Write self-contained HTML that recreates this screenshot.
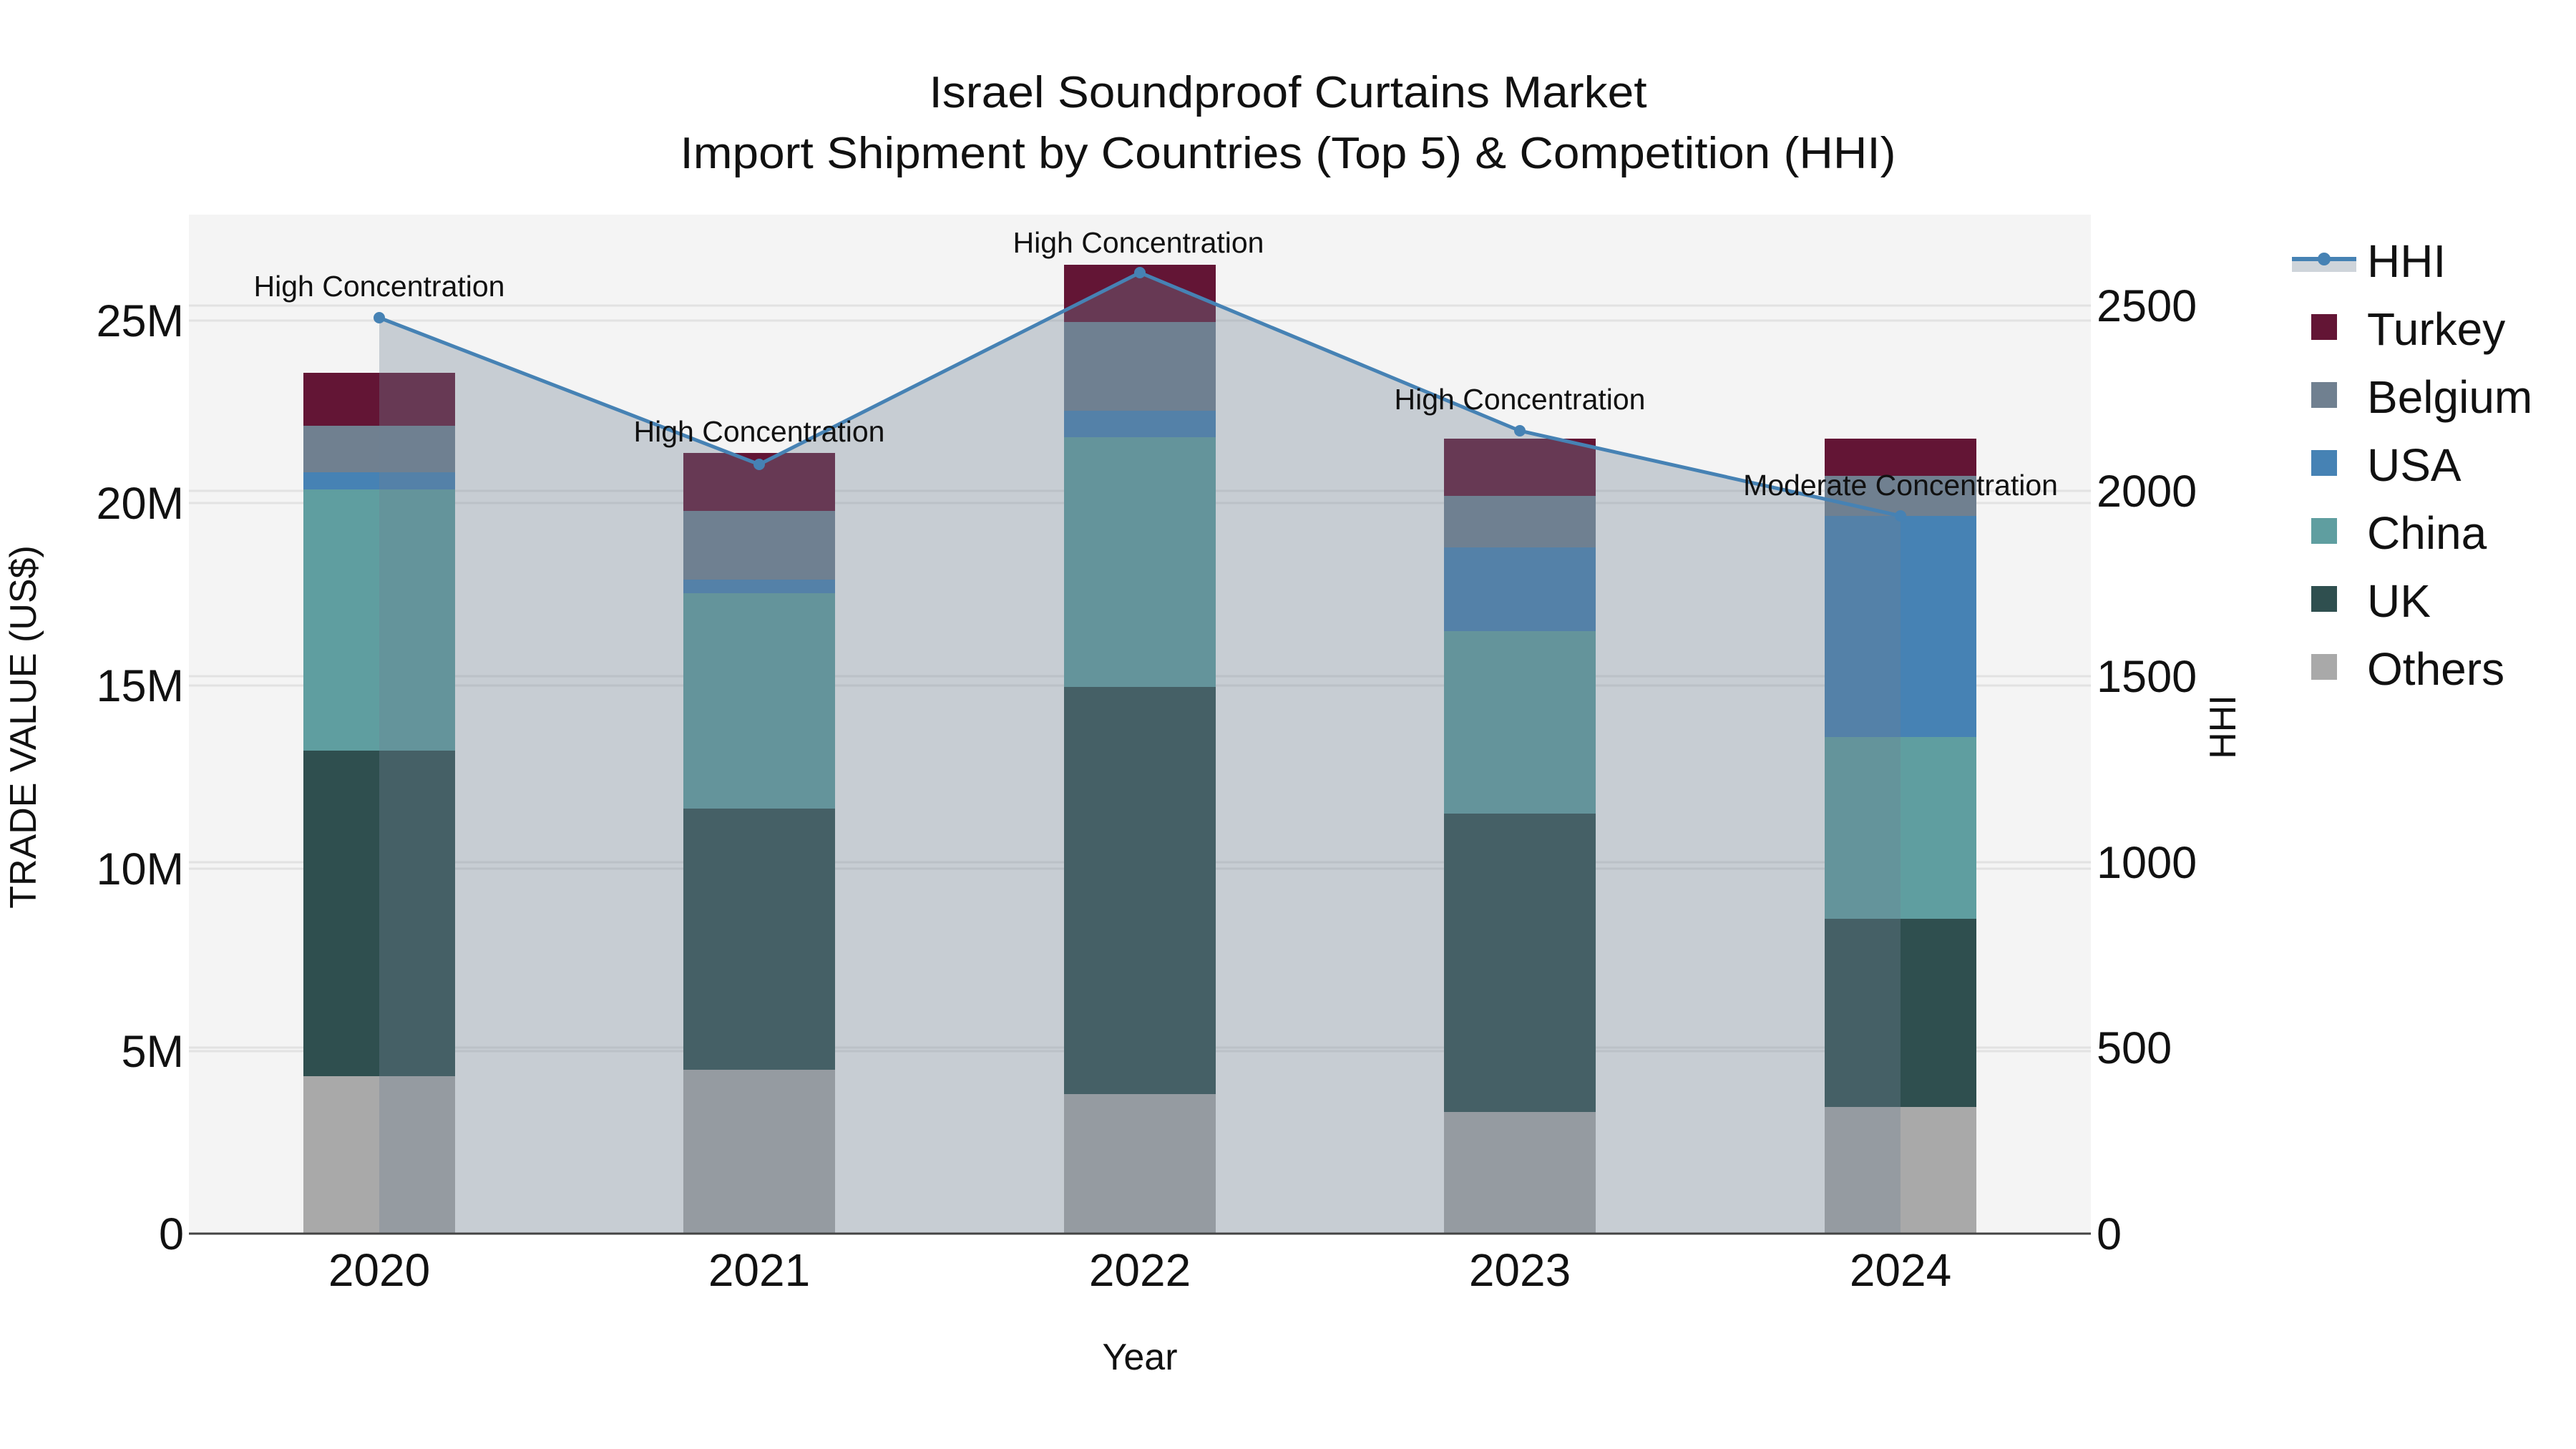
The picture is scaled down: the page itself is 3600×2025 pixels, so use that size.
<!DOCTYPE html>
<html><head><meta charset="utf-8"><style>html,body{margin:0;padding:0;background:#fff}svg{display:block}text{font-family:"Liberation Sans",Arial,sans-serif;fill:#111}</style></head>
<body>
<svg width="3600" height="2025" viewBox="0 0 3600 2025" xmlns="http://www.w3.org/2000/svg">
<rect x="0" y="0" width="3600" height="2025" fill="#fff"/>
<text x="1800" y="150" font-size="62" text-anchor="middle" textLength="1003" lengthAdjust="spacingAndGlyphs">Israel Soundproof Curtains Market</text>
<text x="1800" y="235" font-size="62" text-anchor="middle" textLength="1699" lengthAdjust="spacingAndGlyphs">Import Shipment by Countries (Top 5) &amp; Competition (HHI)</text>
<rect x="264" y="300" width="2658" height="1424" fill="#f4f4f4"/>
<g stroke="#e2e2e2" stroke-width="3">
<line x1="264" x2="2922" y1="1469" y2="1469"/><line x1="264" x2="2922" y1="1214" y2="1214"/><line x1="264" x2="2922" y1="958" y2="958"/><line x1="264" x2="2922" y1="703" y2="703"/><line x1="264" x2="2922" y1="448" y2="448"/>
<line x1="264" x2="2922" y1="1464" y2="1464"/><line x1="264" x2="2922" y1="1205" y2="1205"/><line x1="264" x2="2922" y1="945" y2="945"/><line x1="264" x2="2922" y1="686" y2="686"/><line x1="264" x2="2922" y1="427" y2="427"/>
</g>
<g>
<rect x="424" y="1504" width="212" height="220" fill="#a9a9a9"/><rect x="424" y="1049" width="212" height="455" fill="#2f4f4f"/><rect x="424" y="684" width="212" height="365" fill="#5f9ea0"/><rect x="424" y="660" width="212" height="24" fill="#4682b4"/><rect x="424" y="595" width="212" height="65" fill="#708090"/><rect x="424" y="521" width="212" height="74" fill="#631535"/>
<rect x="955" y="1495" width="212" height="229" fill="#a9a9a9"/><rect x="955" y="1130" width="212" height="365" fill="#2f4f4f"/><rect x="955" y="829" width="212" height="301" fill="#5f9ea0"/><rect x="955" y="810" width="212" height="19" fill="#4682b4"/><rect x="955" y="714" width="212" height="96" fill="#708090"/><rect x="955" y="633" width="212" height="81" fill="#631535"/>
<rect x="1487" y="1529" width="212" height="195" fill="#a9a9a9"/><rect x="1487" y="960" width="212" height="569" fill="#2f4f4f"/><rect x="1487" y="611" width="212" height="349" fill="#5f9ea0"/><rect x="1487" y="574" width="212" height="37" fill="#4682b4"/><rect x="1487" y="450" width="212" height="124" fill="#708090"/><rect x="1487" y="370" width="212" height="80" fill="#631535"/>
<rect x="2018" y="1554" width="212" height="170" fill="#a9a9a9"/><rect x="2018" y="1137" width="212" height="417" fill="#2f4f4f"/><rect x="2018" y="882" width="212" height="255" fill="#5f9ea0"/><rect x="2018" y="765" width="212" height="117" fill="#4682b4"/><rect x="2018" y="693" width="212" height="72" fill="#708090"/><rect x="2018" y="613" width="212" height="80" fill="#631535"/>
<rect x="2550" y="1547" width="212" height="177" fill="#a9a9a9"/><rect x="2550" y="1284" width="212" height="263" fill="#2f4f4f"/><rect x="2550" y="1030" width="212" height="254" fill="#5f9ea0"/><rect x="2550" y="721" width="212" height="309" fill="#4682b4"/><rect x="2550" y="665" width="212" height="56" fill="#708090"/><rect x="2550" y="613" width="212" height="52" fill="#631535"/>
</g>
<polygon points="530,444 1061,649 1593,381 2124,602 2656,721 2656,1724 530,1724" fill="rgb(112,128,147)" fill-opacity="0.34"/>
<line x1="264" x2="2922" y1="1724" y2="1724" stroke="#444" stroke-width="3"/>
<polyline points="530,444 1061,649 1593,381 2124,602 2656,721" fill="none" stroke="#4682b4" stroke-width="5"/>
<g fill="#4682b4"><circle cx="530" cy="444" r="8"/><circle cx="1061" cy="649" r="8"/><circle cx="1593" cy="381" r="8"/><circle cx="2124" cy="602" r="8"/><circle cx="2656" cy="721" r="8"/></g>
<g font-size="41" text-anchor="middle">
<text x="530" y="414">High Concentration</text>
<text x="1061" y="617">High Concentration</text>
<text x="1591" y="353">High Concentration</text>
<text x="2124" y="572">High Concentration</text>
<text x="2656" y="692">Moderate Concentration</text>
</g>
<g font-size="63" text-anchor="end">
<text x="257" y="1746">0</text><text x="257" y="1491">5M</text><text x="257" y="1236">10M</text><text x="257" y="980">15M</text><text x="257" y="725">20M</text><text x="257" y="470">25M</text>
</g>
<g font-size="63">
<text x="2930" y="1746">0</text><text x="2930" y="1486">500</text><text x="2930" y="1227">1000</text><text x="2930" y="967">1500</text><text x="2930" y="708">2000</text><text x="2930" y="449">2500</text>
</g>
<g font-size="64" text-anchor="middle">
<text x="530" y="1797">2020</text><text x="1061" y="1797">2021</text><text x="1593" y="1797">2022</text><text x="2124" y="1797">2023</text><text x="2656" y="1797">2024</text>
</g>
<text x="1593" y="1914" font-size="52" text-anchor="middle">Year</text>
<text transform="translate(50,1016) rotate(-90)" font-size="52" text-anchor="middle">TRADE VALUE (US$)</text>
<text transform="translate(3124,1016) rotate(-90)" font-size="52" text-anchor="middle">HHI</text>
<rect x="3203" y="362" width="90" height="18" fill="rgb(112,128,147)" fill-opacity="0.34"/>
<line x1="3203" x2="3293" y1="362" y2="362" stroke="#4682b4" stroke-width="6"/>
<circle cx="3248" cy="362" r="9" fill="#4682b4"/>
<rect x="3230" y="439" width="36" height="36" fill="#631535"/>
<rect x="3230" y="534" width="36" height="36" fill="#708090"/>
<rect x="3230" y="629" width="36" height="36" fill="#4682b4"/>
<rect x="3230" y="724" width="36" height="36" fill="#5f9ea0"/>
<rect x="3230" y="819" width="36" height="36" fill="#2f4f4f"/>
<rect x="3230" y="914" width="36" height="36" fill="#a9a9a9"/>
<g font-size="64">
<text x="3308" y="387">HHI</text><text x="3308" y="482">Turkey</text><text x="3308" y="577">Belgium</text><text x="3308" y="672">USA</text><text x="3308" y="767">China</text><text x="3308" y="862">UK</text><text x="3308" y="957">Others</text>
</g>
</svg>
</body></html>
